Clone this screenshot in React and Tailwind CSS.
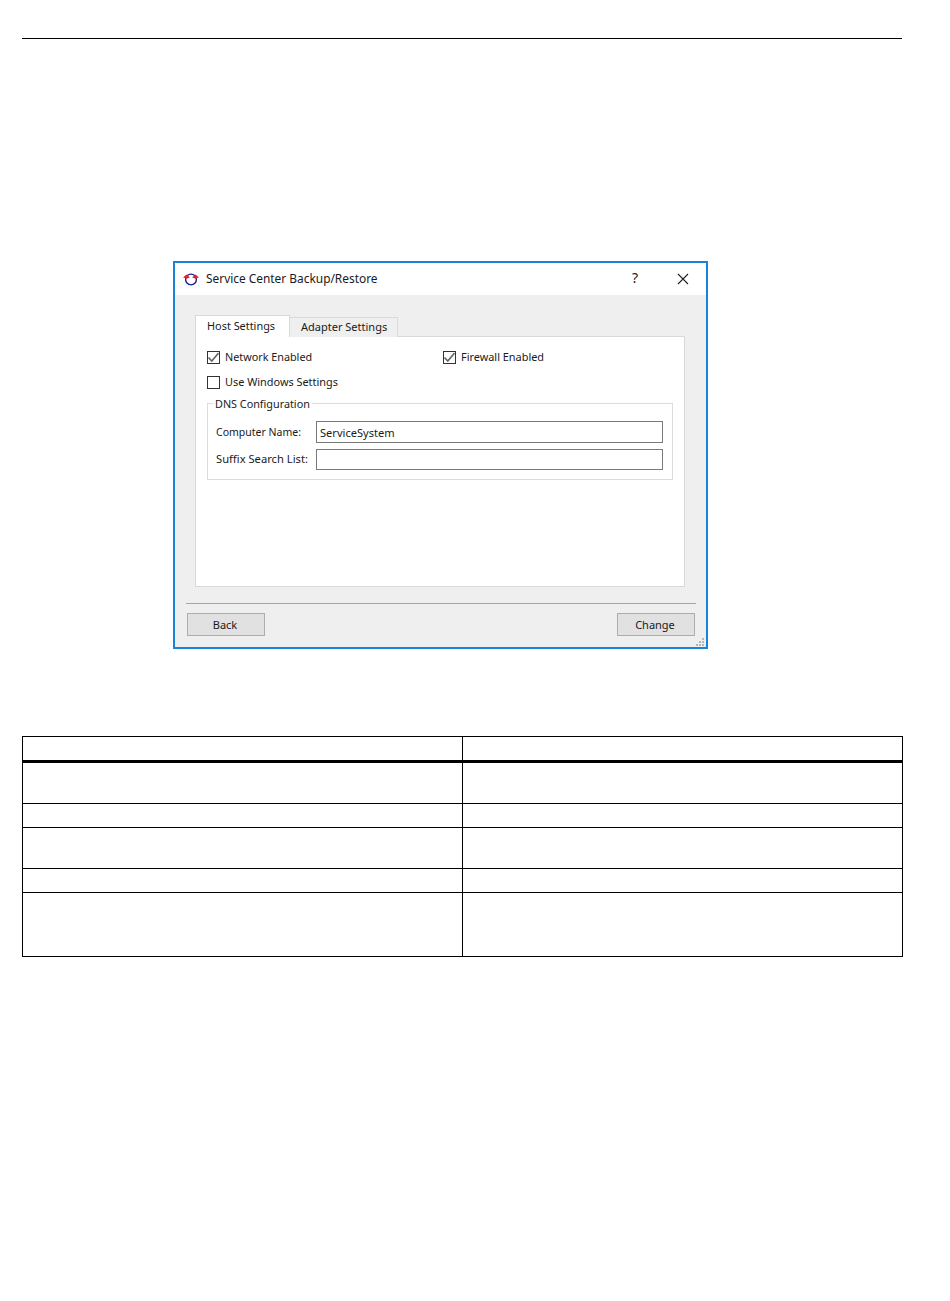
const F = { fontFamily: '"Noto Sans", sans-serif' };

function Check({ checked }) {
  return (
    <span className="w-[13px] h-[13px] border border-[#333333] bg-white shrink-0 flex items-center justify-center">
      {checked && (
        <svg width="11" height="11" viewBox="0 0 11 11" fill="none">
          <path d="M0.5 5.5 L3.8 9 L10.5 1" stroke="#666666" strokeWidth="1.6" />
        </svg>
      )}
    </span>
  );
}

function Logo() {
  return (
    <svg width="16" height="16" viewBox="0 0 16 16" fill="none" className="shrink-0">
      <circle cx="8" cy="8.5" r="5.4" stroke="#1c1c8c" strokeWidth="1.4" />
      <path d="M0 6.5 L3.5 3.5 L7 6.5 L5 7 L3.5 8 L2 7 Z" fill="#ee1c25" />
      <path d="M9 6.5 L12.5 3.5 L16 6.5 L14 7 L12.5 8 L11 7 Z" fill="#ee1c25" />
    </svg>
  );
}

function Row({ h, thick, last }) {
  return (
    <div className={`grid grid-cols-[440px_1fr] ${h} ${last ? "" : thick ? "border-b-[3px] border-black" : "border-b border-black"}`}>
      <div className="border-r border-black" />
      <div />
    </div>
  );
}

export default function App() {
  return (
    <div className="w-[950px] h-[1301px] bg-white pt-[38px] pl-[22px] text-[#1a1a1a]" style={F}>
      <div className="w-[880px] border-t border-black" />

      <div className="ml-[151px] mt-[222px] w-[535px] h-[388px] border-2 border-[#1883d7] bg-[#efefef] flex flex-col">
        <div className="h-[32px] bg-white flex items-center pl-[8px] pr-[17px] shrink-0">
          <Logo />
          <span className="ml-[7px] text-[11.9px] leading-none">Service Center Backup/Restore</span>
          <span className="ml-auto mr-[39px] text-[14px] leading-none -mt-[2px]">?</span>
          <svg width="12" height="12" viewBox="0 0 12 12" fill="none">
            <path d="M1 1 L11 11 M11 1 L1 11" stroke="#222222" strokeWidth="1.1" />
          </svg>
        </div>

        <div className="ml-[20px] mt-[20px] w-[490px]">
          <div className="flex items-end h-[22px] relative z-10">
            <div className="w-[95px] h-[22px] bg-white border border-b-0 border-[#d9d9d9] pl-[11px] text-[10.9px] leading-[20px]">Host Settings</div>
            <div className="w-[108px] h-[20px] bg-[#efefef] border border-l-0 border-b-0 border-[#d9d9d9] pl-[11px] text-[11px] leading-[18px]">Adapter Settings</div>
          </div>
          <div className="h-[251px] -mt-px bg-white border border-[#d9d9d9] pl-[11px] pr-[11px] pt-[13px]">
            <div className="flex items-center h-[14px]">
              <div className="w-[236px] flex items-center gap-[5px]">
                <Check checked />
                <span className="text-[10.8px] leading-none">Network Enabled</span>
              </div>
              <div className="flex items-center gap-[5px]">
                <Check checked />
                <span className="text-[10.9px] leading-none">Firewall Enabled</span>
              </div>
            </div>
            <div className="flex items-center gap-[5px] h-[14px] mt-[11px]">
              <Check />
              <span className="text-[10.9px] leading-none">Use Windows Settings</span>
            </div>
            <div className="relative mt-[14px] w-[466px] h-[77px] border border-[#dcdcdc] pl-[8px] pr-[9px] pt-[17px]">
              <span className="absolute left-[5px] -top-[7px] bg-white px-[2px] text-[10.8px] leading-[14px]">DNS Configuration</span>
              <div className="flex items-center h-[22px]">
                <span className="w-[100px] text-[10.5px] leading-none">Computer Name:</span>
                <div className="w-[347px] h-[22px] border border-[#7a7a7a] pl-[3px] text-[11.1px] leading-[21px]">ServiceSystem</div>
              </div>
              <div className="flex items-center h-[21px] mt-[6px]">
                <span className="w-[100px] text-[11.2px] leading-none whitespace-nowrap -mt-[1px]">Suffix Search List:</span>
                <div className="w-[347px] h-[21px] border border-[#7a7a7a]" />
              </div>
            </div>
          </div>
        </div>

        <div className="ml-[11px] mt-[16px] w-[510px] border-t border-[#a6a6a6]" />
        <div className="ml-[12px] mt-[9px] w-[508px] flex justify-between">
          <div className="w-[78px] h-[23px] bg-[#e1e1e1] border border-[#adadad] text-center pr-[2px] text-[11px] leading-[21px]">Back</div>
          <div className="w-[78px] h-[23px] bg-[#e1e1e1] border border-[#adadad] text-center pr-[2px] text-[11px] leading-[21px]">Change</div>
        </div>
        <div className="relative flex-1">
          <svg width="9" height="9" viewBox="0 0 9 9" className="absolute right-[1px] bottom-0" fill="#b5b5b5">
            <rect x="6" y="0" width="2" height="2" />
            <rect x="3" y="3" width="2" height="2" />
            <rect x="6" y="3" width="2" height="2" />
            <rect x="0" y="6" width="2" height="2" />
            <rect x="3" y="6" width="2" height="2" />
            <rect x="6" y="6" width="2" height="2" />
          </svg>
        </div>
      </div>

      <div className="mt-[87px] w-[881px] border border-black">
        <Row h="h-[26px]" thick />
        <Row h="h-[41px]" />
        <Row h="h-[24px]" />
        <Row h="h-[41px]" />
        <Row h="h-[24px]" />
        <Row h="h-[63px]" last />
      </div>
    </div>
  );
}
